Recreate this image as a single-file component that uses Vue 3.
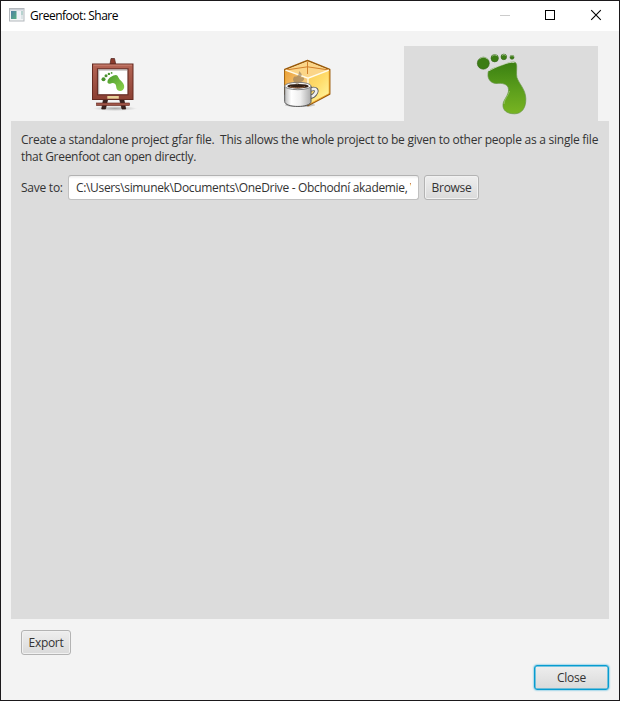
<script setup>
import { ref } from 'vue'

const path = ref('C:\\Users\\simunek\\Documents\\OneDrive - Obchodní akademie, V')
</script>

<template>
  <div class="window">
    <header class="titlebar">
      <svg class="app-icon" width="16" height="14" viewBox="0 0 16 14">
        <defs>
          <linearGradient id="appPane" x1="0" y1="0" x2="1" y2="1">
            <stop offset="0" stop-color="#4f7fa5" />
            <stop offset="1" stop-color="#57b083" />
          </linearGradient>
        </defs>
        <rect x=".5" y=".5" width="14.5" height="12.500" fill="#f4f5f6" stroke="#b3b8bd" />
        <rect x="1" y="1" width="14" height="1.500" fill="#c8ced5" />
        <rect x="2" y="3" width="5.500" height="8" fill="url(#appPane)" />
        <rect x="8.500" y="3" width="3" height="8" fill="#eef1f8" />
        <rect x="12" y="3" width="2" height="4" fill="#b7d3cf" />
        <rect x="12" y="7" width="2" height="4" fill="#dce4e6" />
      </svg>
      <span class="title">Greenfoot: Share</span>
      <svg class="controls" width="119" height="30" viewBox="0 0 119 30">
        <path d="M0 14.500h10" stroke="#cccccc" fill="none" />
        <rect x="45.500" y="9.500" width="9" height="9" fill="none" stroke="#000" />
        <path d="M91.200 9.200l9.600 9.600M100.800 9.200l-9.600 9.600" stroke="#000" stroke-width="1.100" fill="none" />
      </svg>
    </header>

    <nav class="tabs">
      <div class="tab easel">
        <svg width="64" height="66" viewBox="0 0 64 66">
          <defs>
            <linearGradient id="wood" x1="0" y1="0" x2="0" y2="1">
              <stop offset="0" stop-color="#b56555" />
              <stop offset="1" stop-color="#8b4033" />
            </linearGradient>
            <linearGradient id="smallFoot" x1="0" y1="0" x2="1" y2="1">
              <stop offset="0" stop-color="#4c9a2e" />
              <stop offset="1" stop-color="#8cd24b" />
            </linearGradient>
            <radialGradient id="shade">
              <stop offset="0" stop-color="#777" stop-opacity=".6" />
              <stop offset="1" stop-color="#777" stop-opacity="0" />
            </radialGradient>
          </defs>
          <ellipse cx="33" cy="58.500" rx="22" ry="2.500" fill="url(#shade)" />
          <path d="M28 14l1-5.500h3.500l1.200 5.500z" fill="#8b3b2d" stroke="#4d211b" stroke-width=".7" />
          <path d="M21.500 49h4.300l-2.300 10h-3.800zM37.500 49h4.300l1.900 10H40z" fill="#3a2220" stroke="#2b1310" stroke-width=".7" />
          <rect x="14.500" y="53" width="33" height="2.600" fill="#a05548" stroke="#64281f" stroke-width=".6" />
          <rect x="10.500" y="14" width="40.500" height="35.500" fill="url(#wood)" stroke="#642a21" />
          <path d="M11.500 15.200h38.500" stroke="#c98070" fill="none" />
          <rect x="15.500" y="18.800" width="30.500" height="26" fill="#fff" stroke="#682f27" stroke-width="1.200" />
          <path d="M16.700 44V20H45" stroke="#aaa4a2" fill="none" />
          <path d="M25.300 46h11.500v2.700H25.300z" fill="#ead39b" />
          <g fill="url(#smallFoot)">
            <path d="M25.500 31.300c.5-3.500 5.500-6.300 8.400-6.400 2-.1 2.300 2.800 4.300 5 2.600 2.300 4.300 4.400 4 7.300-.4 3.500-3.900 4.600-6.400 3-2.200-1.500-1-4.500-2.600-6.100-1.700-1.700-3.300-1.100-5-.4-1.800.6-3.100-.7-2.700-2.400z" />
            <circle cx="21.500" cy="29.300" r="2" fill="#4a932f" />
            <circle cx="24" cy="25.700" r="1.500" fill="#4a932f" />
            <circle cx="26.900" cy="23.900" r="1.200" fill="#4a932f" />
            <circle cx="29.600" cy="22.900" r=".9" fill="#4a932f" />
          </g>
        </svg>
      </div>
      <div class="tab">
        <svg width="64" height="66" viewBox="0 0 64 66">
          <defs>
            <linearGradient id="boxLeft" x1="0" y1="0" x2="1" y2="1">
              <stop offset="0" stop-color="#eaa13b" />
              <stop offset="1" stop-color="#ffe5a5" />
            </linearGradient>
            <linearGradient id="boxRight" x1="0" y1="0" x2=".7" y2="1">
              <stop offset="0" stop-color="#f8cb59" />
              <stop offset=".5" stop-color="#ffdc6b" />
              <stop offset="1" stop-color="#fff59e" />
            </linearGradient>
            <linearGradient id="mug" x1="0" y1="0" x2="1" y2="0">
              <stop offset="0" stop-color="#bbb" />
              <stop offset=".25" stop-color="#fff" />
              <stop offset=".6" stop-color="#eee" />
              <stop offset="1" stop-color="#aaa" />
            </linearGradient>
          </defs>
          <path d="M9.800 19.500L32.500 10.500l22.200 9v24.500L33 55.700 9.800 44z" fill="#fff0cb" stroke="#9a5a0a" stroke-width="1.500" stroke-linejoin="round" />
          <path d="M10.500 20.300L33 28.200V54.500L10.500 43.500z" fill="url(#boxLeft)" />
          <path d="M33 28.200l21-8v23.400L33 54.800z" fill="url(#boxRight)" />
          <path d="M10.800 20l21.700-8.500L54 20l-21 8z" fill="#fbd588" />
          <path d="M32.500 11.500V24M11 20l21.500-3.200L54 20" stroke="#d2802b" stroke-width="1" fill="none" />
          <path d="M10.500 20.200L33 28.200l21-8M33 28.200v26" stroke="#fffbe9" stroke-width="1.300" fill="none" />
          <path d="M10.400 21v22M54.200 20.500v23L33 54.900" stroke="#efa72c" stroke-width=".9" fill="none" />
          <ellipse cx="25" cy="55" rx="15" ry="2" fill="#555" opacity=".3" />
          <path d="M35.500 39.500c6-1.700 7 1 4.700 4.200-1.300 2-3 2.800-4.700 3" fill="none" stroke="#555" stroke-width="4.400" />
          <path d="M35.500 39.500c6-1.700 7 1 4.700 4.200-1.300 2-3 2.800-4.700 3" fill="none" stroke="#eee" stroke-width="2.700" />
          <path d="M9.700 36v15.500c0 6.600 26.300 6.600 26.300 0V36z" fill="url(#mug)" stroke="#555" stroke-width="1" />
          <ellipse cx="22.900" cy="36" rx="13.200" ry="3.700" fill="#f7f7f7" stroke="#777" stroke-width=".9" />
          <ellipse cx="23" cy="36.200" rx="10.700" ry="2.300" fill="#332016" />
          <path d="M15 36.600c3 1.600 12 1.600 15 0" fill="none" stroke="#956747" />
          <path d="M22.500 35c-4-3.300-6-5.500-3-8.500 2.800.5 4.500-1 4.500-5.500 3 2.500 3.500 4 1.500 6.500 5-1.500 4.500 3 .5 4.500-2 .8-2.500 1.500-3.500 3z" fill="#927d62" opacity=".62" />
        </svg>
      </div>
      <div class="tab active">
        <svg width="70" height="76" viewBox="0 0 70 76">
          <defs>
            <linearGradient id="foot" x1="0" y1="0" x2="0" y2="1">
              <stop offset="0" stop-color="#3d7f12" />
              <stop offset=".2" stop-color="#468b15" />
              <stop offset=".55" stop-color="#5d9f1c" />
              <stop offset="1" stop-color="#78b422" />
            </linearGradient>
          </defs>
          <path d="M22.500 27.200C26 24.300 30 23.500 34 22.100c4.500-1.600 9-4.200 13.500-4.100 2.300.1 3.200 1.500 3.200 4.100.1 4-.5 7.600.2 11.300 2 6.300 8.700 11.900 8.900 21.100.3 9.200-3.800 15.300-11.300 15.300-7.600 0-12-3.500-11.500-9.400.4-4.800 6-9.400 5.500-15.100-.4-5.600-6.700-6.300-11.300-5.800-5.800.5-9.700-4.300-9.200-9.300.1-1.200.1-2.200.5-3z" fill="url(#foot)" stroke="#659544" stroke-width=".7" />
          <path d="M23 26.800c7-4 18.500-9.500 25.400-8.300" fill="none" stroke="#d6dfcb" stroke-width=".8" />
          <path d="M43.500 47c-1 5-5.500 8-5.400 13" fill="none" stroke="#a2c97b" stroke-width=".7" />
          <g fill="#3c7d14" stroke="#39671e" stroke-width=".6">
            <circle cx="17.300" cy="19.200" r="6" />
            <circle cx="28.700" cy="14.200" r="3.700" />
            <circle cx="37.800" cy="12.900" r="2.800" />
            <circle cx="46" cy="13.300" r="2" />
          </g>
          <g fill="none" stroke="#c0d6ae" stroke-width=".9" opacity=".85">
            <path d="M13 15.400c2-2.800 6.800-2.800 8.700 0M26.200 12.200c1.300-1.800 4-1.700 5 0M36 11.600c1-1.400 2.800-1.300 3.700 0M44.700 12.400c.7-1 2-1 2.700 0" />
          </g>
        </svg>
      </div>
    </nav>

    <main class="panel">
      <p class="description"><span class="line first">Create a standalone project gfar file.&nbsp; This allows the whole project to be given to other people as a single file</span><span class="line second">that Greenfoot can open directly.</span></p>
      <div class="save-row">
        <label class="save-label">Save to:</label>
        <div class="field"><div class="field-clip"><span class="path">{{ path }}</span></div></div>
        <button class="btn browse"><span>Browse</span></button>
      </div>
    </main>

    <div class="export-row"><button class="btn export"><span>Export</span></button></div>
    <footer class="footer"><button class="btn close"><span>Close</span></button></footer>
  </div>
</template>

<style>
body { margin: 0; overflow: hidden; }
</style>

<style scoped>
.window {
  box-sizing: border-box;
  width: 620px;
  height: 701px;
  border: 1px solid #1b191b;
  background: #f3f3f3;
  color: #333;
  font: 12px/17px "Open Sans", "Noto Sans", sans-serif;
  display: flex;
  flex-direction: column;
}
.titlebar {
  height: 30px;
  background: #fff;
  color: #000;
  display: flex;
  align-items: center;
  padding-left: 8px;
  flex: none;
}
.app-icon { margin-top: -2px; }
.title { margin: -2px 0 0 5px; white-space: nowrap; letter-spacing: -.48px; }
.controls { margin-left: auto; }
.tabs {
  height: 75px;
  margin: 15px 20px 0 14px;
  display: grid;
  grid-template-columns: 195px 194px 194px;
  flex: none;
}
.tab { display: flex; justify-content: center; align-items: flex-start; padding-top: 4px; height: 71px; }
.tab svg { display: block; flex: none; }
.tab.easel { padding-left: 3px; }
.tab.active { background: #dcdcdc; height: 75px; padding-top: 0; }
.tab.active svg { margin-top: -2px; }
.panel {
  box-sizing: border-box;
  height: 498px;
  margin: 0 10px;
  padding: 10px 10px 0;
  background: #dcdcdc;
  flex: none;
}
.description { margin: 0; white-space: pre; }
.line { display: block; }
.first { letter-spacing: -.25px; }
.second { letter-spacing: -.3px; }
.save-row { display: flex; margin-top: 10px; height: 25px; align-items: center; }
.save-label { width: 47px; flex: none; white-space: nowrap; letter-spacing: -.25px; }
.field {
  box-sizing: border-box;
  width: 351px;
  height: 25px;
  border: 1px solid #c1c1c1;
  border-top-color: #b2b2b2;
  border-radius: 3px;
  background: linear-gradient(#ededed, #fff 3px);
  padding: 0 7px;
  flex: none;
}
.field-clip { overflow: hidden; height: 23px; line-height: 23px; white-space: nowrap; }
.path { letter-spacing: -.34px; }
.btn {
  box-sizing: border-box;
  height: 25px;
  padding: 0;
  border: 1px solid #b3b3b3;
  border-radius: 3px;
  background: linear-gradient(#eeeeee, #dadada);
  box-shadow: inset 0 0 0 1px #f1f1f1;
  color: #333;
  font: inherit;
  letter-spacing: -.3px;
}
.browse { width: 55px; margin-left: 5px; }
.export-row { padding: 11px 20px 0; height: 26px; display: flex; }
.export { width: 50px; }
.footer { display: flex; justify-content: flex-end; padding: 9px 10px 0; }
.close {
  width: 75px;
  border: 1px solid #079cd0;
  box-shadow: 0 0 2px #039ed3, inset 0 0 0 .5px #039ed3;
}
</style>
